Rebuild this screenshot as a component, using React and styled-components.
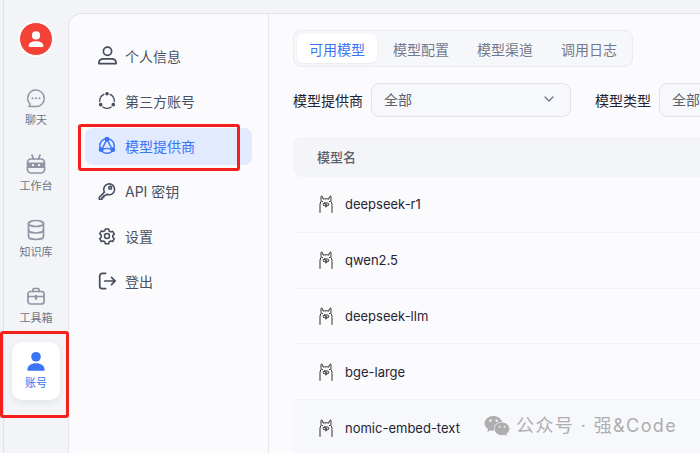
import React from 'react';
import styled, { createGlobalStyle } from 'styled-components';
import { FaWeixin } from 'react-icons/fa';

const Global = createGlobalStyle`
  html, body { margin: 0; padding: 0; width: 700px; height: 453px; overflow: hidden; background: #f3f4f7; }
  * { box-sizing: border-box; }
  body { font-family: Inter, "Noto Sans CJK SC", "Noto Sans", sans-serif; }
`;

const Shell = styled.div`
  position: relative;
  display: flex;
  width: 700px;
  height: 453px;
  padding-left: 3px;
  overflow: hidden;
  background: #f3f4f7;
`;
const Rail = styled.nav`
  flex: 0 0 65px;
  border-left: 1px solid #dfe1ea;
  display: flex;
  flex-direction: column;
  align-items: center;
  padding-top: 22px;
`;
const Avatar = styled.div`
  width: 34px;
  height: 34px;
  border-radius: 50%;
  background: #f44336;
  border: 1px solid #fff;
  box-shadow: 0 0 0 1px #fff;
  display: flex;
  align-items: center;
  justify-content: center;
  margin-bottom: 22px;
`;
const RailItem = styled.div`
  width: 48px;
  height: 58px;
  margin-bottom: 8px;
  border-radius: 10px;
  display: flex;
  flex-direction: column;
  align-items: center;
  justify-content: center;
  gap: ${p => (p.$active ? 5 : 3)}px;
  font-size: 11px;
  line-height: 15px;
  color: ${p => (p.$active ? '#3b74f6' : '#6f7585')};
  background: ${p => (p.$active ? '#fff' : 'transparent')};
  box-shadow: ${p => (p.$active ? '0 2px 6px rgba(30,40,80,.08)' : 'none')};
  svg { display: block; }
`;
const Main = styled.div`
  flex: 1;
  margin-top: 13px;
  display: flex;
  min-width: 0;
  background: #fbfbfd;
  border-top: 1px solid #e2e4ec;
  border-left: 1px solid #e2e4ec;
  border-top-left-radius: 14px;
`;
const SubNav = styled.aside`
  flex: 0 0 199px;
  border-right: 1px solid #e8e9f0;
  padding: 24px 16px 0 16px;
  display: flex;
  flex-direction: column;
  gap: 8px;
`;
const SubItem = styled.div`
  height: 37px;
  width: 167px;
  border-radius: 8px;
  display: flex;
  align-items: center;
  gap: 7px;
  padding: 0 0 2px 11px;
  font-size: 14px;
  color: ${p => (p.$active ? '#3b74f6' : '#4a5162')};
  background: ${p => (p.$active ? '#e1eaff' : 'transparent')};
`;
const SubSvg = styled.svg`
  flex: none;
  display: block;
  margin: 0 ${p => (22 - p.$s) / 2}px;
`;
const Content = styled.section`
  flex: 1;
  min-width: 0;
  padding: 16px 0 0 24px;
  overflow: hidden;
`;
const Tabs = styled.div`
  display: inline-flex;
  gap: 4px;
  height: 37px;
  width: 340px;
  padding: 3px;
  border: 1px solid #e9ebf2;
  border-radius: 8px;
  background: #f6f7fa;
`;
const Tab = styled.div`
  width: 80px;
  display: flex;
  align-items: center;
  justify-content: center;
  border-radius: 6px;
  font-size: 14px;
  color: ${p => (p.$active ? '#3b74f6' : '#73798a')};
  background: ${p => (p.$active ? '#fff' : 'transparent')};
  box-shadow: ${p => (p.$active ? '0 1px 2px rgba(30,40,80,.06)' : 'none')};
`;
const Filters = styled.div`
  display: flex;
  align-items: center;
  height: 34px;
  margin-top: 16px;
  width: 640px;
`;
const FilterLabel = styled.label`
  flex: none;
  font-size: 14px;
  color: #1f2430;
  margin-right: 8px;
`;
const Select = styled.div`
  flex: none;
  width: ${p => p.$w}px;
  height: 34px;
  margin-right: ${p => p.$mr || 0}px;
  border: 1px solid #e0e2ec;
  border-radius: 8px;
  background: #f7f8fb;
  display: flex;
  align-items: center;
  justify-content: space-between;
  padding: 0 15px 2px 12px;
  font-size: 14px;
  color: #5b6170;
`;
const Table = styled.div`
  margin-top: 20px;
  width: 420px;
`;
const HeadRow = styled.div`
  height: 40px;
  display: flex;
  align-items: center;
  padding: 0 0 2px 24px;
  background: #f4f5f8;
  border-radius: 8px 0 0 8px;
  font-size: 13px;
  font-weight: 500;
  color: #5a5f6c;
`;
const Row = styled.div`
  height: 55.8px;
  display: flex;
  align-items: center;
  gap: 12px;
  padding: 0 0 0 26px;
  border-bottom: 1px solid ${p => (p.$hover ? 'transparent' : '#f0f2f7')};
  background: ${p => (p.$hover ? '#f7f8fb' : 'transparent')};
  border-radius: ${p => (p.$hover ? '8px 0 0 8px' : '0')};
  font-size: 13px;
  color: #1f2532;
  svg { flex: none; display: block; }
`;
const Mark = styled.div`
  position: absolute;
  pointer-events: none;
  border: 3px solid #f5201c;
  border-radius: 3px;
  left: ${p => p.$l}px;
  top: ${p => p.$t}px;
  width: ${p => p.$w}px;
  height: ${p => p.$h}px;
`;
const Watermark = styled.div`
  position: absolute;
  left: 484px;
  top: 413px;
  display: flex;
  align-items: center;
  gap: 6px;
  font-size: 18px;
  line-height: 26px;
  letter-spacing: 1.4px;
  color: #aeaeae;
  white-space: nowrap;
  svg { display: block; }
`;

const RailIcon = ({ children, size = 24 }) => (
  <svg width={size} height={size} viewBox="0 0 24 24" fill="none" stroke="#8f95a5" strokeWidth="1.5" strokeLinecap="round" strokeLinejoin="round">{children}</svg>
);
const Sub = ({ children, c = '#454c5e', w = 1.8, s = 22 }) => (
  <SubSvg $s={s} width={s} height={s} viewBox="0 0 22 22" fill="none" stroke={c} strokeWidth={w} strokeLinecap="round" strokeLinejoin="round">{children}</SubSvg>
);
const Llama = () => (
  <svg width="14" height="18" viewBox="0 0 14 18" fill="none" stroke="#1a1a1a" strokeWidth="0.9" strokeLinecap="round" strokeLinejoin="round">
    <path d="M1 17.500V10.500C1 8.500 1.400 7.200 2.200 6.200L1.900 2C1.900 .8 3.100 .8 3.500 1.800L4.300 4.200C5.800 3.600 8.200 3.600 9.700 4.200L10.500 1.800C10.900 .8 12.100 .8 12.100 2L11.800 6.200C12.600 7.200 13 8.500 13 10.500V17.500" />
    <rect x="4.200" y="8" width="5.600" height="2.800" rx="1.400" />
    <path d="M6.200 9.300h1.600M7 10.800v1.200M3.300 6.600h.3M10.400 6.600h.3" />
  </svg>
);

const rows = ['deepseek-r1', 'qwen2.5', 'deepseek-llm', 'bge-large', 'nomic-embed-text'];

export default function App() {
  return (
    <>
      <Global />
      <Shell>
        <Rail>
          <Avatar>
            <svg width="20" height="20" viewBox="0 0 20 20" fill="#fff">
              <circle cx="10" cy="6.400" r="4.100" />
              <path d="M2.600 17.200c0-3.400 3-5 7.400-5s7.400 1.600 7.400 5c0 .5-.4.8-.9.8H3.500c-.5 0-.9-.3-.9-.8z" />
            </svg>
          </Avatar>
          <RailItem>
            <RailIcon>
              <path d="M12 4a8.300 8.300 0 0 1 0 16.600H5l1.100-2.500A8.300 8.300 0 0 1 12 4z" />
              <path d="M8.500 12.300h.01M12 12.300h.01M15.500 12.300h.01" strokeWidth="2" />
            </RailIcon>
            聊天
          </RailItem>
          <RailItem>
            <RailIcon>
              <rect x="3.500" y="7" width="17" height="14" rx="3.500" strokeWidth="1.700" />
              <path d="M8 3 9.500 7M16 3 14.500 7" strokeWidth="1.700" />
              <rect x="3.500" y="10.500" width="17" height="5.500" fill="#8f95a5" stroke="none" />
              <path d="M9 13.200h.01M15 13.200h.01" stroke="#f3f4f7" strokeWidth="2.200" />
            </RailIcon>
            工作台
          </RailItem>
          <RailItem>
            <RailIcon>
              <ellipse cx="12" cy="5.500" rx="7.500" ry="3" strokeWidth="1.700" />
              <path d="M4.500 5.500v13c0 1.700 3.400 3 7.500 3s7.500-1.300 7.500-3v-13" strokeWidth="1.700" />
              <path d="M4.500 12c0 1.700 3.400 3 7.500 3s7.500-1.300 7.500-3" strokeWidth="1.700" />
            </RailIcon>
            知识库
          </RailItem>
          <RailItem>
            <RailIcon>
              <rect x="4" y="7.500" width="16" height="12.500" rx="2.500" strokeWidth="1.700" />
              <path d="M9 7.500V5.500a1 1 0 0 1 1-1h4a1 1 0 0 1 1 1v2M4 12.500h16" strokeWidth="1.700" />
              <path d="M12 12v2.500" strokeWidth="2.400" />
            </RailIcon>
            工具箱
          </RailItem>
          <RailItem $active>
            <svg width="20" height="20" viewBox="0 0 22 22" fill="#3b74f6">
              <circle cx="11" cy="6.300" r="5.300" />
              <path d="M1.500 21c0-5 4-7.500 9.500-7.500s9.500 2.500 9.500 7.500c0 .4-.3.6-.6.6H2.100c-.3 0-.6-.2-.6-.6z" />
            </svg>
            账号
          </RailItem>
        </Rail>
        <Main>
          <SubNav>
            <SubItem>
              <Sub s={21}>
                <circle cx="11" cy="6.500" r="4.300" />
                <path d="M2 19.500v-1c0-2.500 2.200-4 5-4h8c2.800 0 5 1.500 5 4v1z" />
              </Sub>
              个人信息
            </SubItem>
            <SubItem>
              <Sub w={1.4} s={20}>
                <path d="M14.380 3.750A8 8 0 0 1 18.970 11.700M15.590 17.550A8 8 0 0 1 6.410 17.550M3.030 11.700A8 8 0 0 1 7.620 3.750" />
                <circle cx="11" cy="3" r="1.300" fill="#454c5e" />
                <circle cx="4.070" cy="15" r="1.300" fill="#454c5e" />
                <circle cx="17.930" cy="15" r="1.300" fill="#454c5e" />
              </Sub>
              第三方账号
            </SubItem>
            <SubItem $active>
              <Sub c="#3b74f6" w={1.6} s={20}>
                <circle cx="11" cy="11" r="8" />
                <path d="M11 3.500 5 15.500M11 3.500l6 12M5 15.500c3.500-2.500 8.500-2.500 12 0" />
                <circle cx="11" cy="3.500" r="1.800" fill="#3b74f6" />
                <circle cx="4.500" cy="15" r="1.800" fill="#3b74f6" />
                <circle cx="17.500" cy="15" r="1.800" fill="#3b74f6" />
              </Sub>
              模型提供商
            </SubItem>
            <SubItem>
              <Sub w={1.7} s={20}>
                <path d="M8.200 12.200 2.500 17.800V20h3v-2h2v-2h1.500l1.800-1.400a6 6 0 1 0-2.600-2.400z" />
                <circle cx="14.500" cy="7.500" r="1.600" />
              </Sub>
              API 密钥
            </SubItem>
            <SubItem>
              <Sub w={1.9} s={18}>
                <path d="M9 2.500h4l.6 2.400 1.900 1.100 2.400-.7 2 3.400-1.800 1.700v2.200l1.800 1.700-2 3.400-2.400-.7-1.900 1.100-.6 2.400H9l-.6-2.400-1.900-1.100-2.400.7-2-3.400 1.800-1.700V9.900L2.100 8.200l2-3.400 2.400.7 1.900-1.100z" />
                <circle cx="11" cy="11" r="3" />
              </Sub>
              设置
            </SubItem>
            <SubItem>
              <Sub w={1.9} s={20}>
                <path d="M9.500 2.500H6a3 3 0 0 0-3 3v11a3 3 0 0 0 3 3h3.500" />
                <path d="M8.500 11H20M16 7l4 4-4 4" />
              </Sub>
              登出
            </SubItem>
          </SubNav>
          <Content>
            <Tabs>
              <Tab $active>可用模型</Tab>
              <Tab>模型配置</Tab>
              <Tab>模型渠道</Tab>
              <Tab>调用日志</Tab>
            </Tabs>
            <Filters>
              <FilterLabel>模型提供商</FilterLabel>
              <Select $w={200} $mr={24}>
                全部
                <svg width="12" height="12" viewBox="0 0 12 12" fill="none" stroke="#6f7585" strokeWidth="1.300" strokeLinecap="round" strokeLinejoin="round"><path d="M2 4l4 4 4-4" /></svg>
              </Select>
              <FilterLabel>模型类型</FilterLabel>
              <Select $w={200}>全部</Select>
            </Filters>
            <Table>
              <HeadRow>模型名</HeadRow>
              {rows.map((r, i) => (
                <Row key={r} $hover={i === rows.length - 1}>
                  <Llama />
                  {r}
                </Row>
              ))}
            </Table>
          </Content>
        </Main>
        <Mark $l={78} $t={124} $w={162} $h={47} />
        <Mark $l={0} $t={331} $w={69} $h={87} />
        <Watermark>
          <FaWeixin size={26} />
          公众号 · 强&Code
        </Watermark>
      </Shell>
    </>
  );
}
